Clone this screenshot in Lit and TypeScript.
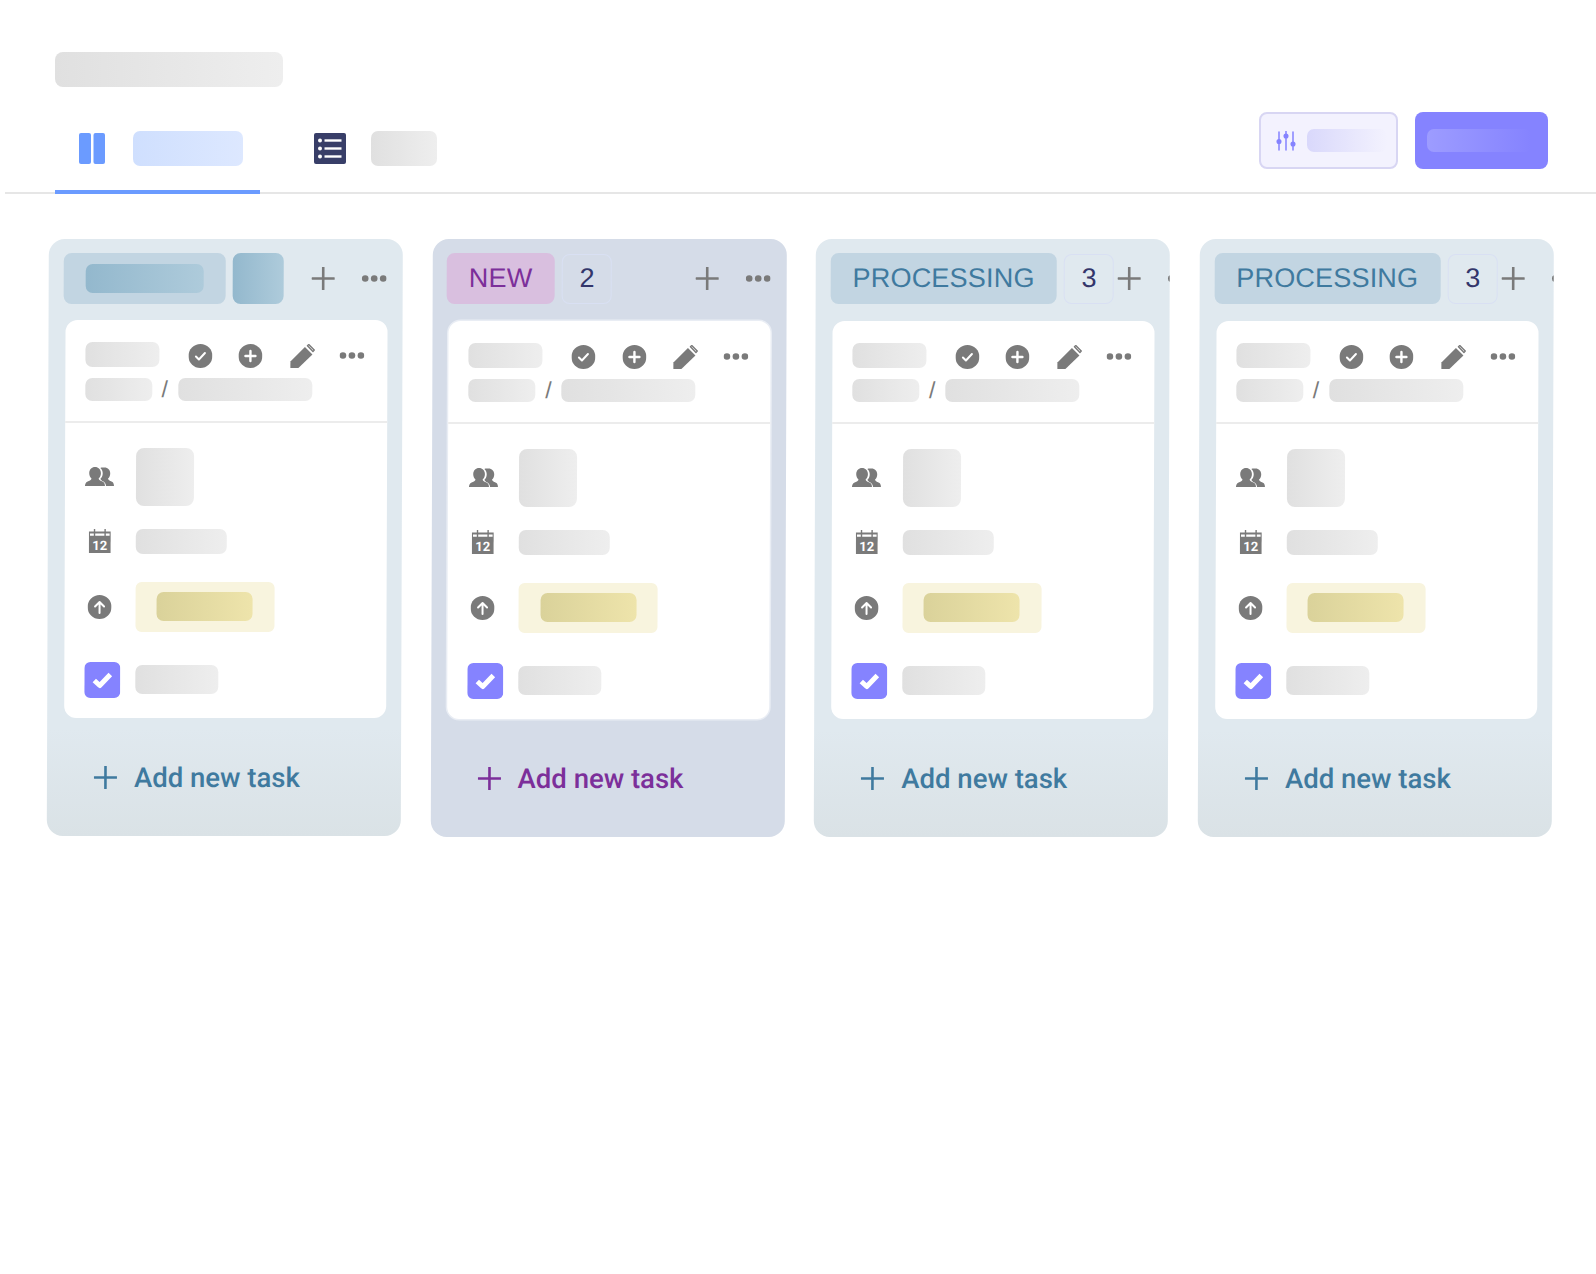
import { LitElement, css, html, svg } from 'lit';
import { customElement } from 'lit/decorators.js';

type Column = { tone: string; label?: string; count?: number };

const columns: Column[] = [
  { tone: 'blue first' },
  { tone: 'purple', label: 'NEW', count: 2 },
  { tone: 'blue', label: 'PROCESSING', count: 3 },
  { tone: 'blue', label: 'PROCESSING', count: 3 },
];

const plusIcon = svg`<path d="M11.500 0.500v22M0.500 11.500h22" fill="none" stroke="currentColor" stroke-width="2.600" stroke-linecap="round"/>`;

@customElement('app-root')
export class AppRoot extends LitElement {
  static styles = css`
    :host {
      display: block;
      min-height: 1274px;
      background: #fff;
      overflow: hidden;
      font-family: "Liberation Sans", Arial, sans-serif;
    }
    .ph {
      flex: none;
      border-radius: 7px;
      background: linear-gradient(90deg, #e0e0e0, #eeeeee);
    }
    svg {
      display: block;
      flex: none;
    }

    .top {
      padding-top: 52px;
    }
    .title {
      width: 228px;
      height: 35px;
      margin-left: 55px;
      border-radius: 8px;
    }
    .toolbar {
      display: flex;
      height: 80px;
      margin: 25px 0 0 5px;
      padding-right: 48.500px;
      border-bottom: 2px solid #e6e6e6;
    }
    .tab {
      display: flex;
      align-items: center;
      align-self: flex-end;
      height: 35px;
      padding-bottom: 24px;
      margin-bottom: -2px;
    }
    .tab.active {
      width: 181px;
      margin-left: 50px;
      padding-left: 24px;
      border-bottom: 4px solid #6b9bff;
    }
    .tab.list {
      margin-left: 54px;
      padding-bottom: 28px;
    }
    .tab-label-on {
      width: 110px;
      height: 35px;
      margin-left: 28px;
      background: linear-gradient(90deg, #cfdffe, #dde8ff);
    }
    .tab-label-off {
      width: 66px;
      height: 35px;
      margin-left: 25px;
    }
    .btn {
      display: flex;
      align-items: center;
      flex: none;
      height: 57px;
      box-sizing: border-box;
      border-radius: 8px;
    }
    .btn-filter {
      width: 139px;
      margin-left: auto;
      padding-left: 15px;
      background: #f3f2fe;
      border: 2px solid #d8d6f3;
      color: #8583ff;
    }
    .btn-filter .ph {
      width: 80px;
      height: 23px;
      margin-left: 11px;
      background: linear-gradient(90deg, #d9d8fb, #f3f2fe);
    }
    .btn-primary {
      width: 132.500px;
      margin-left: 17.500px;
      padding-left: 12px;
      background: #8583ff;
    }
    .btn-primary .ph {
      width: 104px;
      height: 23px;
      background: linear-gradient(90deg, #9d9cff, #8583ff);
    }

    .board {
      display: flex;
      align-items: flex-start;
      gap: 29.700px;
      padding: 45px 0 0 49px;
      transform: skewX(-0.2deg);
      transform-origin: top left;
    }
    .col {
      flex: none;
      width: 354px;
      height: 598px;
      border-radius: 16px;
      overflow: hidden;
    }
    .col.first {
      height: 597px;
    }
    .col.first .card {
      margin-top: 16px;
    }
    .col.blue {
      background: linear-gradient(180deg, #e0e9ef 0%, #e0e9ef 82%, #dae2e6 100%);
      --pill: #c2d5e2;
      --pill-text: #3f7a9f;
      --inner: linear-gradient(90deg, #93b8cd, #aecbdb);
    }
    .col.purple {
      background: #d5dce8;
      --pill: #d9bfdf;
      --pill-text: #7c2f9a;
    }
    .col-head {
      display: flex;
      align-items: center;
      height: 51px;
      padding: 14px 16px 0 14.500px;
    }
    .head-left {
      display: flex;
      align-items: center;
      flex: 1 0 auto;
      gap: 7.500px;
    }
    .pill {
      display: flex;
      align-items: center;
      height: 51px;
      padding: 0 22px;
      border-radius: 8px;
      background: var(--pill);
      color: var(--pill-text);
      font-size: 27px;
      letter-spacing: 0.2px;
      white-space: nowrap;
    }
    .pill .ph {
      width: 118px;
      height: 29px;
      background: var(--inner);
    }
    .badge {
      display: flex;
      align-items: center;
      justify-content: center;
      width: 50px;
      height: 50px;
      box-sizing: border-box;
      border: 1.500px solid #d9e0f3;
      border-radius: 8px;
      color: #33366b;
      font-size: 27px;
    }
    .badge.blank {
      width: 51px;
      height: 51px;
      border: 0;
      background: linear-gradient(90deg, #93b8cd, #aecbdb);
    }
    .head-actions {
      display: flex;
      align-items: center;
      flex: none;
      gap: 27px;
      margin-left: 4px;
      color: #7a7a7a;
    }

    .card {
      width: 322px;
      margin: 17px 0 0 16.500px;
      border-radius: 12px;
      background: #fff;
      color: #7a7a7a;
    }
    .col.purple .card {
      box-shadow: 0 0 0 1.500px #e9edf4;
    }
    .card-head {
      padding: 21.500px 0 20px 20px;
      border-bottom: 2px solid #ececec;
    }
    .line {
      display: flex;
      align-items: center;
    }
    .ref {
      width: 74px;
      height: 25px;
    }
    .tools {
      display: flex;
      align-items: center;
      gap: 26.500px;
      margin: 2px 0 0 29px;
    }
    .pencil {
      margin-right: -2px;
    }
    .path-line {
      margin-top: 10px;
    }
    .path-a {
      width: 67px;
      height: 23px;
    }
    .path-b {
      width: 134px;
      height: 23px;
    }
    .slash {
      width: 26px;
      text-align: center;
      font-size: 23px;
      line-height: 23px;
    }
    .card-body {
      padding: 25px 0 20px 20px;
    }
    .row {
      display: flex;
      align-items: center;
    }
    .row.people-row {
      margin-bottom: 23px;
    }
    .row.tag-row {
      margin: 28px 0 30px;
    }
    .cell {
      display: flex;
      justify-content: center;
      flex: none;
      width: 30px;
      margin-right: 21px;
    }
    .cell.start {
      justify-content: flex-start;
    }
    .avatar {
      width: 58px;
      height: 58px;
      border-radius: 8px;
    }
    .date {
      width: 91px;
      height: 25px;
    }
    .tag {
      display: flex;
      align-items: center;
      justify-content: center;
      width: 139px;
      height: 50px;
      border-radius: 6px;
      background: #f8f4de;
    }
    .tag .ph {
      width: 96px;
      height: 29px;
      background: linear-gradient(90deg, #dad29a, #eee4ab);
    }
    .name {
      width: 83px;
      height: 29px;
    }

    .add {
      display: flex;
      align-items: center;
      gap: 17px;
      height: 26px;
      margin: 47px 0 0 47px;
      color: var(--pill-text);
      font-family: Roboto, "Liberation Sans", sans-serif;
      font-size: 27.500px;
      font-weight: 500;
      white-space: nowrap;
    }
  `;

  private dots() {
    return html`<svg width="25" height="7" viewBox="0 0 25 7" fill="currentColor">
      <circle cx="3.500" cy="3.500" r="3.300" /><circle cx="12.500" cy="3.500" r="3.300" /><circle cx="21.500" cy="3.500" r="3.300" />
    </svg>`;
  }

  private renderHead(col: Column) {
    return html`<div class="col-head">
      <div class="head-left">
        ${col.label
          ? html`<div class="pill">${col.label}</div><div class="badge">${col.count}</div>`
          : html`<div class="pill"><div class="ph"></div></div><div class="badge blank"></div>`}
      </div>
      <div class="head-actions">
        <svg width="23" height="23" viewBox="0 0 23 23">${plusIcon}</svg>
        ${this.dots()}
      </div>
    </div>`;
  }

  private renderCard() {
    return html`<div class="card">
      <div class="card-head">
        <div class="line">
          <div class="ph ref"></div>
          <div class="tools">
            <svg width="24" height="24" viewBox="0 0 24 24">
              <circle cx="12" cy="12" r="12" fill="currentColor" />
              <path d="M7.500 12.500l3 3 6-6.500" fill="none" stroke="#fff" stroke-width="2" stroke-linecap="round" stroke-linejoin="round" />
            </svg>
            <svg width="24" height="24" viewBox="0 0 24 24">
              <circle cx="12" cy="12" r="12" fill="currentColor" />
              <path d="M12 7v10M7 12h10" fill="none" stroke="#fff" stroke-width="2.400" stroke-linecap="round" />
            </svg>
            <svg class="pencil" width="26" height="24" viewBox="0 0 26 24">
              <path d="M1 24v-6.500L15.500 3l7.500 7.500L9 24z" fill="currentColor" />
              <path d="M18 1.800l1.300-1.200 5.500 5.500-1.300 1.400z" fill="#fff" stroke="currentColor" stroke-width="1.400" stroke-linejoin="round" />
            </svg>
            ${this.dots()}
          </div>
        </div>
        <div class="line path-line">
          <div class="ph path-a"></div>
          <div class="slash">/</div>
          <div class="ph path-b"></div>
        </div>
      </div>
      <div class="card-body">
        <div class="row people-row">
          <div class="cell">
            <svg width="29" height="19" viewBox="0 0 29 19" fill="currentColor">
              <path d="M17.500 0.500c-.8 0-1.500.1-2.200.4 1.500 1.300 2.400 3.200 2.400 5.400 0 2.300-.9 4.300-2.300 5.500.2 1.200 1.500 2 3 2.800 1.100.6 2.200 1.600 2.700 4.400h7.900c0-1.100-.4-2.700-1-3.500-.8-1-4.700-1.700-5-3.900 1.300-1.100 2.200-3 2.200-5.100 0-3.600-2.400-6-5.700-6z" />
              <path d="M10 0C6.700 0 4.200 2.500 4.200 6.200c0 2.200.9 4.200 2.300 5.300-.3 2.200-4.600 3-5.400 4-.6.800-1.100 2.400-1.100 3.500h20c0-1.100-.4-2.700-1-3.500-.8-1-5.100-1.800-5.400-4 1.400-1.100 2.300-3.100 2.300-5.300C15.900 2.500 13.300 0 10 0z" />
            </svg>
          </div>
          <div class="ph avatar"></div>
        </div>
        <div class="row">
          <div class="cell">
            <svg width="22" height="24" viewBox="0 0 22 24" fill="currentColor">
              <path d="M0 2.500h22V24H0z" />
              <path d="M5 0h1.400v5H5zM15.600 0H17v5h-1.400z" />
              <path d="M1.200 4.500h3.800v2.300H1.200zM6.400 4.500h9.200v2.300H6.400zM17 4.500h3.800v2.300H17z" fill="#fff" />
              <text x="11" y="20.800" text-anchor="middle" fill="#fff" font-family="Roboto" font-weight="700" font-size="13">12</text>
            </svg>
          </div>
          <div class="ph date"></div>
        </div>
        <div class="row tag-row">
          <div class="cell">
            <svg width="24" height="24" viewBox="0 0 24 24">
              <circle cx="12" cy="12" r="12" fill="currentColor" />
              <path d="M12 18V7M7.500 11.500L12 7l4.500 4.500" fill="none" stroke="#fff" stroke-width="2" stroke-linecap="round" stroke-linejoin="round" />
            </svg>
          </div>
          <div class="tag"><div class="ph"></div></div>
        </div>
        <div class="row">
          <div class="cell start">
            <svg width="36" height="36" viewBox="0 0 36 36">
              <rect width="36" height="36" rx="6" fill="#8583ff" />
              <path d="M10 18.500l5.500 5 10.500-11" fill="none" stroke="#fff" stroke-width="5" stroke-linejoin="round" />
            </svg>
          </div>
          <div class="ph name"></div>
        </div>
      </div>
    </div>`;
  }

  render() {
    return html`
      <div class="top">
        <div class="ph title"></div>
        <div class="toolbar">
          <div class="tab active">
            <svg width="26" height="31" viewBox="0 0 26 31" fill="#6b9bff">
              <rect width="12" height="31" rx="2" /><rect x="14.500" width="11.500" height="31" rx="2" />
            </svg>
            <div class="ph tab-label-on"></div>
          </div>
          <div class="tab list">
            <svg width="32" height="31" viewBox="0 0 32 31">
              <rect width="32" height="31" rx="2" fill="#383e68" />
              <g fill="#fff">
                <circle cx="6" cy="7.500" r="2" /><circle cx="6" cy="15.500" r="2" /><circle cx="6" cy="23.500" r="2" />
                <rect x="10.500" y="6.300" width="17" height="2.400" /><rect x="10.500" y="14.300" width="17" height="2.400" /><rect x="10.500" y="22.300" width="17" height="2.400" />
              </g>
            </svg>
            <div class="ph tab-label-off"></div>
          </div>
          <div class="btn btn-filter">
            <svg width="20" height="20" viewBox="0 0 20 20" fill="currentColor" stroke="currentColor" stroke-width="1.500" stroke-linecap="round">
              <path d="M3 1v18M10 0v19M17 1v18" fill="none" />
              <circle cx="3" cy="10.500" r="1.800" /><circle cx="10" cy="5" r="1.800" /><circle cx="17" cy="13" r="1.800" />
            </svg>
            <div class="ph"></div>
          </div>
          <div class="btn btn-primary"><div class="ph"></div></div>
        </div>
      </div>
      <div class="board">
        ${columns.map(
          (col) => html`<div class="col ${col.tone}">
            ${this.renderHead(col)} ${this.renderCard()}
            <div class="add">
              <svg width="23" height="23" viewBox="0 0 23 23">${plusIcon}</svg>
              <span>Add new task</span>
            </div>
          </div>`
        )}
      </div>
    `;
  }
}
